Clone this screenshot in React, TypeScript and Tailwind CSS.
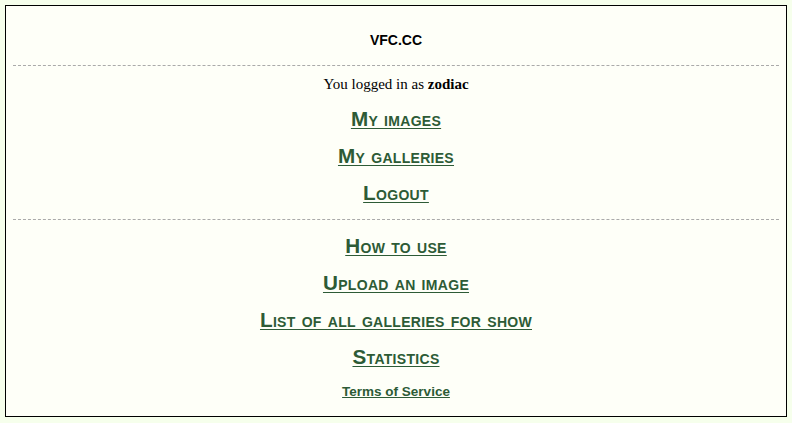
import React from 'react';

const links1 = ['My images', 'My galleries', 'Logout'];
const links2 = ['How to use', 'Upload an image', 'List of all galleries for show', 'Statistics'];

const NavLink: React.FC<{ label: string }> = ({ label }) => (
    <div className="h-[37px] flex items-center justify-center">
        <a href="#" className="text-[20.7px] font-bold underline tracking-[0.3px] [font-variant:small-caps] text-[#2d5b36] decoration-1 underline-offset-2" style={{ fontFamily: '"Liberation Sans", Arial, sans-serif' }}>{label}</a>
    </div>
);

export default function App() {
    return (
        <div className="w-[792px] h-[423px] bg-[#f6ffec] p-[5px]">
            <div className="h-[412px] border border-black bg-[#fefff8] px-[7px]">
                <div className="h-[60px] pt-[24px] text-center text-[14px] font-bold text-black border-b border-dashed border-[#aaaaaa]" style={{ fontFamily: '"Liberation Sans", Arial, sans-serif' }}>
                    VFC.CC
                </div>
                <div className="pb-[8px] border-b border-dashed border-[#aaaaaa]">
                    <div className="h-[34px] pt-[3px] flex items-center justify-center text-[15px] text-black" style={{ fontFamily: '"Liberation Serif", "Times New Roman", serif' }}>
                        <span>You logged in as <b>zodiac</b></span>
                    </div>
                    {links1.map(l => <NavLink key={l} label={l} />)}
                </div>
                <div className="pt-[7px]">
                    {links2.map(l => <NavLink key={l} label={l} />)}
                    <div className="h-[33px] pt-[1px] flex items-center justify-center">
                        <a href="#" className="text-[13.5px] font-bold underline text-[#2d5b36]" style={{ fontFamily: '"Liberation Sans", Arial, sans-serif' }}>Terms of Service</a>
                    </div>
                </div>
            </div>
        </div>
    );
}
